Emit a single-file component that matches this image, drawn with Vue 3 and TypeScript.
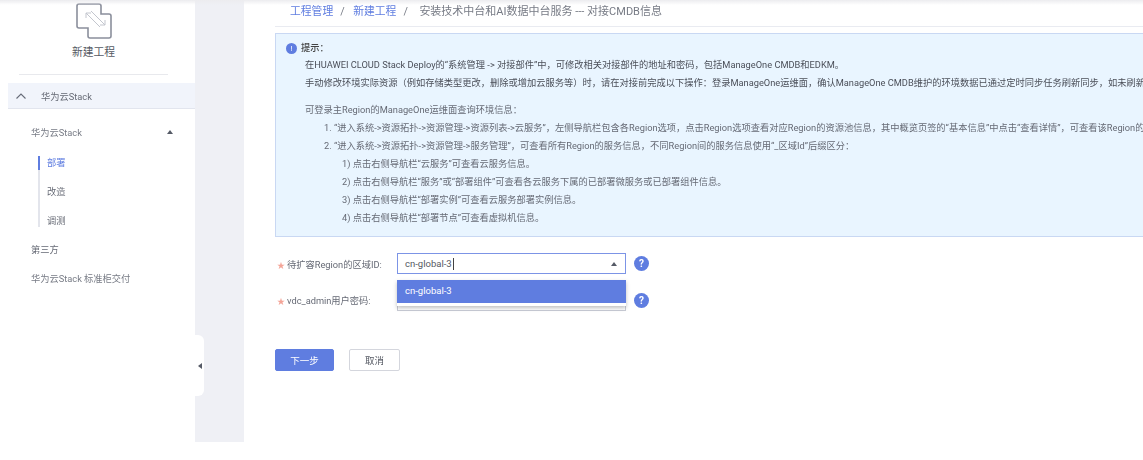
<script setup lang="ts">
interface Crumb { text: string; link: boolean }
const crumbs: Crumb[] = [
  { text: '工程管理', link: true },
  { text: '新建工程', link: true },
  { text: '安装技术中台和AI数据中台服务 --- 对接CMDB信息', link: false },
]
const steps: string[] = ['部署', '改造', '调测']
const subLines: string[] = [
  '1) 点击右侧导航栏“云服务”可查看云服务信息。',
  '2) 点击右侧导航栏“服务”或“部署组件”可查看各云服务下属的已部署微服务或已部署组件信息。',
  '3) 点击右侧导航栏“部署实例”可查看云服务部署实例信息。',
  '4) 点击右侧导航栏“部署节点”可查看虚拟机信息。',
]
</script>

<template>
  <div class="page">
    <aside class="side">
      <div class="brand">
        <svg class="brand-icon" width="36" height="36" viewBox="0 0 36 36" fill="none">
          <path d="M3 1H23a2 2 0 0 1 2 2V11H33a2 2 0 0 1 2 2V33a2 2 0 0 1-2 2H14a2 2 0 0 1-2-2V25H3a2 2 0 0 1-2-2V3a2 2 0 0 1 2-2Z" stroke="#8b8f9c" stroke-width="1.6"/>
          <path d="M10 10 24 24M10 10h5M10 10v5M15 8 29 22M29 22h-5M29 22v-5" stroke="#c3c6ce" stroke-width="1"/>
        </svg>
        <div class="brand-name">新建工程</div>
      </div>
      <div class="side-rule"></div>
      <div class="group-head">
        <svg width="12" height="8" viewBox="0 0 12 8" fill="none"><path d="M1.5 6.5 6 2l4.500 4.500" stroke="#666b78" stroke-width="1.100"/></svg>
        <span>华为云Stack</span>
      </div>
      <div class="sub-head">
        <span>华为云Stack</span>
        <i class="caret"></i>
      </div>
      <ul class="steps">
        <li v-for="(s, i) in steps" :key="s" :class="{ on: i === 0 }">{{ s }}</li>
      </ul>
      <div class="side-item third">第三方</div>
      <div class="side-item std">华为云Stack 标准柜交付</div>
    </aside>

    <div class="gutter">
      <div class="handle"><i></i></div>
    </div>

    <main class="main">
      <nav class="crumbs">
        <template v-for="(c, i) in crumbs" :key="c.text">
          <span v-if="i" class="sep">/</span>
          <span :class="c.link ? 'link' : 'cur'">{{ c.text }}</span>
        </template>
      </nav>

      <section class="tip">
        <div class="tip-title"><b class="info">!</b><span>提示：</span></div>
        <p class="strong l1">在HUAWEI CLOUD Stack Deploy的“系统管理 -&gt; 对接部件”中，可修改相关对接部件的地址和密码，包括ManageOne CMDB和EDKM。</p>
        <p class="strong l2">手动修改环境实际资源（例如存储类型更改，删除或增加云服务等）时，请在对接前完成以下操作：登录ManageOne运维面，确认ManageOne CMDB维护的环境数据已通过定时同步任务刷新同步，如未刷新</p>
        <p class="l3">可登录主Region的ManageOne运维面查询环境信息：</p>
        <p class="ind1">1. “进入系统-&gt;资源拓扑-&gt;资源管理-&gt;资源列表-&gt;云服务”，左侧导航栏包含各Region选项，点击Region选项查看对应Region的资源池信息，其中概览页签的“基本信息”中点击“查看详情”，可查看该Region的</p>
        <p class="ind1">2. “进入系统-&gt;资源拓扑-&gt;资源管理-&gt;服务管理”，可查看所有Region的服务信息，不同Region间的服务信息使用“_区域Id”后缀区分：</p>
        <p v-for="l in subLines" :key="l" class="ind2">{{ l }}</p>
      </section>

      <form class="form" @submit.prevent>
        <div class="row">
          <label><em>★</em>待扩容Region的区域ID:</label>
          <div class="select focus">
            <span>cn-global-3</span><i class="cursor"></i>
            <i class="caret"></i>
          </div>
          <b class="help">?</b>
          <div class="drop"><div class="opt">cn-global-3</div></div>
        </div>
        <div class="row second">
          <label><em>★</em>vdc_admin用户密码:</label>
          <div class="select pwd"></div>
          <b class="help">?</b>
        </div>
        <div class="actions">
          <button type="button" class="btn primary">下一步</button>
          <button type="button" class="btn">取消</button>
        </div>
      </form>
    </main>
  </div>
</template>

<style>
html, body { margin: 0; background: #fff; overflow: hidden; }
</style>

<style scoped>
.page {
  display: flex;
  width: 1143px;
  height: 442px;
  font-family: Roboto, "Noto Sans CJK SC", sans-serif;
  font-size: 9.250px;
  color: #666a75;
  position: relative;
  overflow: hidden;
  filter: blur(0.4px);
}
.page::after {
  content: "";
  position: absolute;
  left: 0; right: 0; top: 0;
  height: 5px;
  background: linear-gradient(#ececef, rgba(236,236,239,0));
  pointer-events: none;
}
.side { width: 195px; flex: none; background: #fff; box-sizing: border-box; }
.brand { display: flex; flex-direction: column; align-items: center; padding: 3px 8px 0 0; height: 74px; box-sizing: border-box; }
.brand-name { font-size: 10.800px; line-height: 16px; margin-top: 6px; color: #555963; }
.side-rule { height: 1px; background: #e8e9ed; margin: 0 27px 0 19px; }
.group-head {
  margin: 8px 0 0 8px;
  height: 26px;
  background: #f1f4fb;
  border-bottom: 1px solid #e2e5ee;
  display: flex;
  align-items: center;
  box-sizing: border-box;
  padding-left: 7px;
  gap: 14px;
}
.sub-head {
  display: flex;
  align-items: center;
  justify-content: space-between;
  margin-top: 15px;
  height: 16px;
  padding: 0 22px 0 31px;
  color: #777b85;
}
.caret { width: 0; height: 0; border: 3.500px solid transparent; border-bottom: 4px solid #555a66; border-top: 0; display: block; }
.steps {
  list-style: none;
  margin: 16px 0 0 38px;
  padding: 0;
  border-left: 2px solid #e3e5ec;
  height: 71px;
}
.steps li { height: 29px; line-height: 14px; padding-left: 7px; position: relative; }
.steps li.on { color: #5f7de0; }
.steps li.on::before { content: ""; position: absolute; left: -2px; top: 0; width: 2px; height: 14px; background: #5f7de0; }
.side-item { padding-left: 31px; line-height: 14px; }
.third { margin-top: 16px; }
.std { margin-top: 15px; color: #777b85; }

.gutter { width: 49px; flex: none; background: #eff0f5; position: relative; }
.handle {
  position: absolute;
  left: 0; top: 335px;
  width: 9px; height: 61px;
  background: #fff;
  border-radius: 0 6px 6px 0;
  display: flex; align-items: center; justify-content: center;
}
.handle i { width: 0; height: 0; border: 3px solid transparent; border-right: 4px solid #555a66; border-left: 0; display: block; }

.main { flex: 1; min-width: 0; padding-left: 31px; overflow: hidden; background: #fff; }
.crumbs { height: 24px; border-bottom: 1px solid #e9ebf1; padding: 2px 0 0 15px; display: flex; align-items: flex-start; font-size: 10.800px; line-height: 20px; white-space: nowrap; }
.link { color: #5f7de0; }
.cur { color: #777b85; margin-left: 3px; font-size: 11px; }
.sep { color: #777b85; margin: 0 7px; width: 6px; }

.tip {
  margin-top: 6px;
  height: 204px;
  box-sizing: border-box;
  background: #e9f5ff;
  border: 1px solid #c9d8f3;
  border-right: 0;
  padding: 7px 0 0 10px;
  white-space: nowrap;
  position: relative;
}
.tip p { margin: 0; line-height: 18px; }
.tip-title { display: flex; align-items: center; gap: 4px; line-height: 14px; color: #444; font-weight: 500; }
.info {
  width: 11px; height: 11px; border-radius: 50%;
  background: #5f7de0; color: #fff; font-size: 8px; line-height: 11px; text-align: center; font-weight: 400;
}
.strong { color: #4b4f59; padding-left: 19px; }
.l1 { margin-top: 1px !important; }
.l3 { margin-top: 9px !important; padding-left: 19px; }
.ind1 { padding-left: 38px; }
.ind2 { padding-left: 56px; }

.form { padding-top: 16px; }
.row { display: flex; align-items: center; height: 21px; position: relative; }
.second { margin-top: 15px; height: 22px; }
.row label { width: 122px; flex: none; padding-left: 2px; box-sizing: border-box; white-space: nowrap; }
.row em { font-style: normal; color: #f4a497; font-size: 8px; margin-right: 2px; }
.select {
  width: 229px; height: 21px; box-sizing: border-box;
  border: 1px solid #c9ccd6;
  display: flex; align-items: center;
  padding: 0 7px;
  color: #555963;
  background: #fff;
  position: relative;
  font-size: 9.500px;
}
.focus { border-color: #7c94e6; }
.cursor { width: 1px; height: 12px; background: #444; margin-left: 1px; }
.select .caret { position: absolute; right: 8px; top: 8px; }
.pwd { height: 22px; }
.help {
  width: 15px; height: 15px; border-radius: 50%;
  background: #5f7de0; color: #fff;
  font-size: 10px; line-height: 15px; text-align: center;
  margin-left: 8px;
}
.drop {
  position: absolute; left: 122px; top: 27px; z-index: 2;
  width: 229px;
  background: #fff;
  padding-bottom: 3px;
  box-shadow: 0 2px 4px rgba(0,0,0,.25);
}
.opt { height: 23px; line-height: 22px; background: #5f7de0; color: #fff; padding-left: 8px; font-size: 9.500px; }

.actions { display: flex; gap: 15px; margin-top: 38px; }
.btn {
  height: 22px; width: 51px;
  background: #fff;
  border: 1px solid #d4d6dd;
  border-radius: 2px;
  font: inherit; color: #555963; padding: 0;
  font-size: 9.500px;
}
.primary { width: 59px; background: #5f7de0; border-color: #5f7de0; color: #fff; }
</style>
